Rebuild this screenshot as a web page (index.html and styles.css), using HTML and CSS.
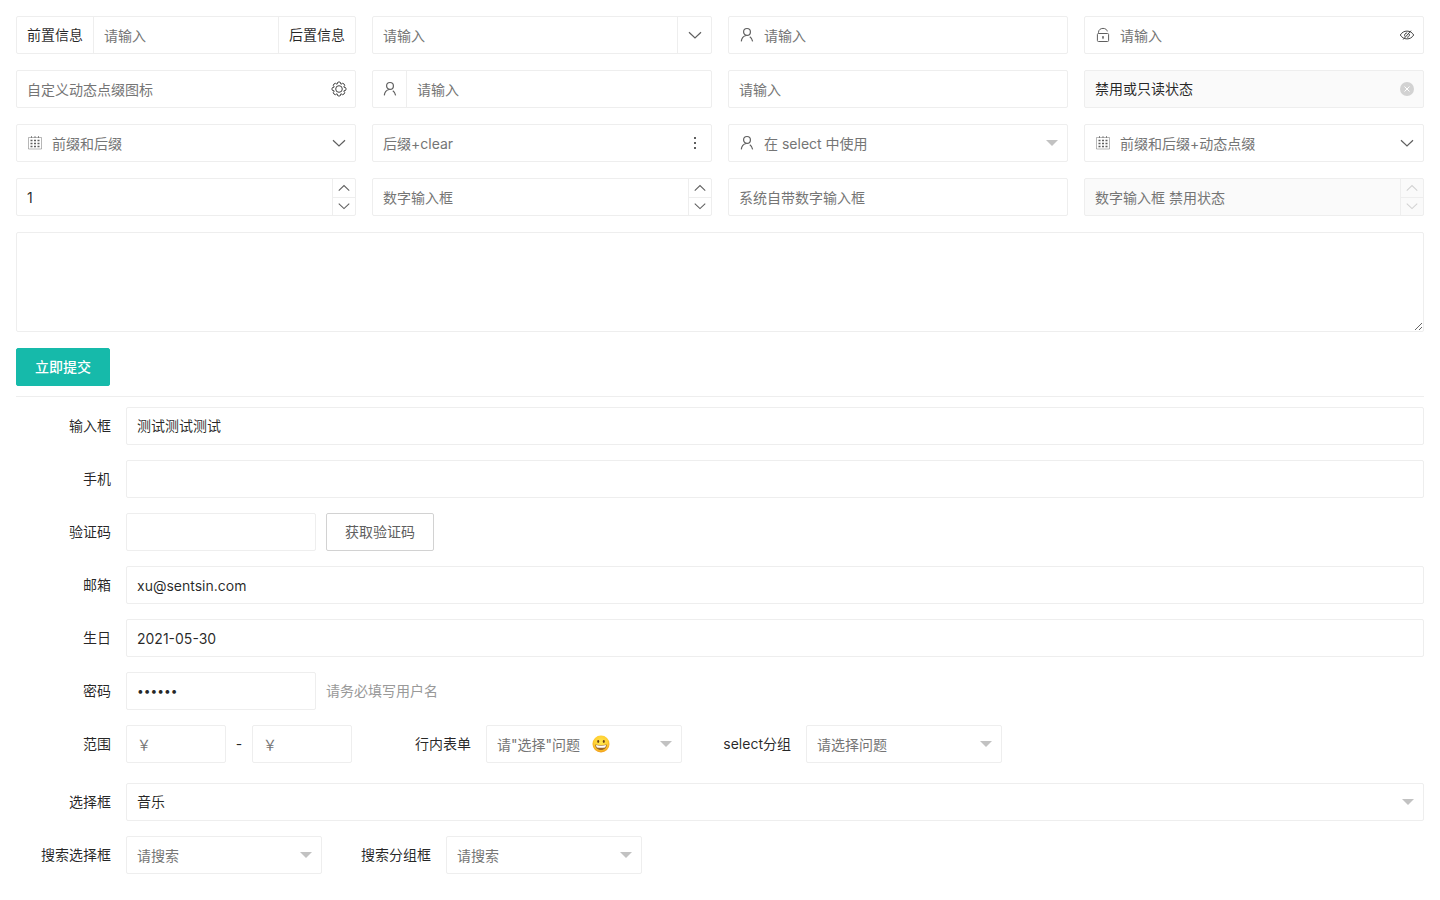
FILE: index.html
```html
<!DOCTYPE html>
<html lang="zh-CN">
<head>
<meta charset="utf-8">
<meta name="viewport" content="width=device-width, initial-scale=1">
<title>表单</title>
<link rel="stylesheet" href="styles.css">
</head>
<body>
<svg class="sprite" aria-hidden="true">
  <symbol id="i-user" viewBox="0 0 16 16"><g stroke-width="1.200"><circle cx="8" cy="4.900" r="3.400"/><path d="M7.300 8.500C4.500 9 2.600 11.400 2.300 14.400M10.800 9.800c1.600 1 2.500 2.600 2.800 4.600"/></g></symbol>
  <symbol id="i-down" viewBox="0 0 16 16"><path stroke-width="1.200" d="M2 5.200l6 5.800 6-5.800"/></symbol>
  <symbol id="i-up" viewBox="0 0 16 16"><path stroke-width="1.200" d="M2 11l6-5.800 6 5.800"/></symbol>
  <symbol id="i-lock" viewBox="0 0 16 16"><rect x="2.400" y="6.500" width="11.200" height="8" rx="1"/><path d="M3.500 6.500V5.400c0-2.500 2-4 4.500-4 2.300 0 4 1.100 4.300 3M8 9.600v2.500"/><circle cx="8" cy="10" r=".5"/></symbol>
  <symbol id="i-eye" viewBox="0 0 16 16"><path d="M1.300 8c1.600-2.600 3.900-3.900 6.700-3.900S13.100 5.400 14.700 8c-1.600 2.600-3.900 3.900-6.700 3.900S2.900 10.600 1.300 8z"/><path d="M5.900 9.500C5 7.700 6.200 5.900 8.200 5.900M10.200 6.900c.7 1.700-.3 3.200-2.100 3.400M12 3.700L4.200 12.500"/></symbol>
  <symbol id="i-gear" viewBox="0 0 16 16"><path stroke-linejoin="round" d="M6.200 3.100L6.500 1.500Q8 .2 9.500 1.500L9.800 3.100Q10 3.400 10.200 3.200L11.500 2.300Q13.500 2.500 13.700 4.500L12.800 5.800Q12.600 6 12.900 6.200L14.500 6.500Q15.800 8 14.500 9.500L12.900 9.800Q12.600 10 12.800 10.200L13.700 11.500Q13.500 13.500 11.500 13.700L10.200 12.800Q10 12.600 9.800 12.900L9.500 14.500Q8 15.800 6.500 14.500L6.200 12.900Q6 12.600 5.800 12.800L4.500 13.700Q2.500 13.500 2.300 11.500L3.200 10.200Q3.400 10 3.100 9.800L1.500 9.500Q.2 8 1.500 6.500L3.100 6.200Q3.400 6 3.200 5.800L2.300 4.500Q2.500 2.500 4.500 2.300L5.800 3.200Q6 3.400 6.200 3.100z"/><circle cx="8" cy="8" r="3.300"/></symbol>
  <symbol id="i-cal" viewBox="0 0 16 16"><path opacity=".45" d="M1.500 2.500v11.500M14.500 2.500v11.500M1.500 2.500h13M1.500 14h13"/><path opacity=".7" d="M4.500 1v2M8 1v2M11.500 1v2"/><path stroke-width="1.500" stroke-dasharray="2 1.500" d="M3.500 5.500h9.500M3.500 8.500h9.500M3.500 11.500h9.500"/></symbol>
  <symbol id="i-more" viewBox="0 0 16 16"><path stroke-width="2" d="M8 2v2M8 7v2M8 12v2"/></symbol>
  <symbol id="i-clear" viewBox="0 0 16 16"><circle class="solid" cx="8" cy="8" r="7"/><path class="cross" d="M5.500 5.500l5 5M10.500 5.500l-5 5"/></symbol>
</svg>

<main class="page">
  <form>
    <div class="grid">
      <div class="field"><label class="addon" for="a1">前置信息</label><input id="a1" placeholder="请输入"><label class="addon addon-end" for="a1">后置信息</label></div>
      <div class="field"><input aria-label="输入" placeholder="请输入"><span class="affix split-end"><svg><use href="#i-down"/></svg></span></div>
      <div class="field prefixed"><span class="affix lead"><svg><use href="#i-user"/></svg></span><input aria-label="用户" placeholder="请输入"></div>
      <div class="field prefixed"><span class="affix lead"><svg><use href="#i-lock"/></svg></span><input type="password" aria-label="密码输入" placeholder="请输入"><button type="button" class="affix dark" aria-label="显示密码"><svg><use href="#i-eye"/></svg></button></div>

      <div class="field"><input aria-label="图标" placeholder="自定义动态点缀图标"><button type="button" class="affix dark" aria-label="设置"><svg><use href="#i-gear"/></svg></button></div>
      <div class="field"><span class="affix split-start"><svg><use href="#i-user"/></svg></span><input aria-label="用户名" placeholder="请输入"></div>
      <div class="field"><input aria-label="内容" placeholder="请输入"></div>
      <div class="field disabled"><input aria-label="只读" value="禁用或只读状态" readonly><button type="button" class="affix clear" aria-label="清空"><svg><use href="#i-clear"/></svg></button></div>

      <div class="field prefixed"><span class="affix lead"><svg><use href="#i-cal"/></svg></span><input aria-label="前后缀" placeholder="前缀和后缀"><span class="affix"><svg><use href="#i-down"/></svg></span></div>
      <div class="field"><input aria-label="后缀" placeholder="后缀+clear"><span class="affix"><svg><use href="#i-more"/></svg></span></div>
      <div class="field prefixed select"><span class="affix lead"><svg><use href="#i-user"/></svg></span><select class="empty" aria-label="选择"><option>在 select 中使用</option></select></div>
      <div class="field prefixed"><span class="affix lead"><svg><use href="#i-cal"/></svg></span><input aria-label="动态点缀" placeholder="前缀和后缀+动态点缀"><span class="affix"><svg><use href="#i-down"/></svg></span></div>

      <div class="field"><input type="number" aria-label="数字" value="1"><span class="stepper"><button type="button" aria-label="增加"><svg><use href="#i-up"/></svg></button><button type="button" aria-label="减少"><svg><use href="#i-down"/></svg></button></span></div>
      <div class="field"><input type="number" aria-label="数字输入框" placeholder="数字输入框"><span class="stepper"><button type="button" aria-label="增加"><svg><use href="#i-up"/></svg></button><button type="button" aria-label="减少"><svg><use href="#i-down"/></svg></button></span></div>
      <div class="field"><input type="number" aria-label="系统数字输入框" placeholder="系统自带数字输入框"></div>
      <div class="field disabled"><input type="number" aria-label="禁用数字" placeholder="数字输入框 禁用状态" disabled><span class="stepper"><button type="button" aria-label="增加" disabled><svg><use href="#i-up"/></svg></button><button type="button" aria-label="减少" disabled><svg><use href="#i-down"/></svg></button></span></div>
    </div>
    <textarea aria-label="多行文本"></textarea>
    <button type="submit" class="btn btn-primary">立即提交</button>
  </form>
  <hr>
  <form class="rows">
    <div class="row"><label class="label" for="f1">输入框</label><div class="field grow"><input id="f1" value="测试测试测试"></div></div>
    <div class="row"><label class="label" for="f2">手机</label><div class="field grow"><input id="f2" type="tel"></div></div>
    <div class="row"><label class="label" for="f3">验证码</label><div class="field medium"><input id="f3"></div><button type="button" class="btn btn-plain">获取验证码</button></div>
    <div class="row"><label class="label" for="f4">邮箱</label><div class="field grow"><input id="f4" class="latin" type="email" value="xu@sentsin.com"></div></div>
    <div class="row"><label class="label" for="f5">生日</label><div class="field grow"><input id="f5" class="latin" value="2021-05-30"></div></div>
    <div class="row"><label class="label" for="f6">密码</label><div class="field medium"><input id="f6" class="secret" type="password" value="123456"></div><span class="hint">请务必填写用户名</span></div>
    <div class="row row-inline row-loose">
      <div class="group range"><label class="label" for="f7">范围</label><div class="field small"><input id="f7" placeholder="￥"></div><span class="dash">-</span><div class="field small"><input aria-label="最大值" placeholder="￥"></div></div>
      <div class="group"><label class="label" for="f8">行内表单</label>
        <div class="field select choice"><select id="f8" class="empty"><option>请"选择"问题</option></select>
          <svg class="emoji" viewBox="0 0 18 18" aria-hidden="true"><defs><radialGradient id="face" cx=".5" cy=".4" r=".6"><stop offset="0" stop-color="#ffe64d"/><stop offset=".65" stop-color="#ffd033"/><stop offset="1" stop-color="#f09a1a"/></radialGradient></defs><circle cx="9" cy="9" r="8.500" fill="url(#face)"/><ellipse cx="6.200" cy="6.500" rx="1" ry="1.400" fill="#6b4216"/><ellipse cx="11.800" cy="6.500" rx="1" ry="1.400" fill="#6b4216"/><path d="M3.300 9.500c3.500.900 7.900.900 11.400 0 .3 3-2.200 5.500-5.700 5.500s-6-2.500-5.700-5.500z" fill="#9a6425"/><path d="M4 10.100c3.200.700 6.800.700 10 0 0 1-.3 1.700-.9 2.300-2.600.5-5.600.5-8.200 0-.6-.6-.9-1.300-.9-2.300z" fill="#fff"/></svg>
        </div></div>
      <div class="group"><label class="label" for="f9">select分组</label><div class="field select choice"><select id="f9" class="empty"><option>请选择问题</option></select></div></div>
    </div>
    <div class="row"><label class="label" for="f10">选择框</label><div class="field select grow"><select id="f10"><option>音乐</option></select></div></div>
    <div class="row row-inline">
      <div class="group"><label class="label" for="f11">搜索选择框</label><div class="field select choice"><select id="f11" class="empty"><option>请搜索</option></select></div></div>
      <div class="group"><label class="label" for="f12">搜索分组框</label><div class="field select choice"><select id="f12" class="empty"><option>请搜索</option></select></div></div>
    </div>
  </form>
</main>
</body>
</html>
```

FILE: styles.css
```css
* { box-sizing: border-box; }

body {
  margin: 0;
  background: #fff;
  color: rgba(0, 0, 0, .85);
  font: 14px/24px Inter, "Noto Sans CJK SC", sans-serif;
}

input, select, textarea, button {
  margin: 0;
  border: 0;
  background: none;
  color: inherit;
  font: inherit;
}

.sprite { position: absolute; width: 0; height: 0; }
.page { padding: 16px; }

.grid {
  display: grid;
  grid-template-columns: repeat(4, minmax(0, 1fr));
  gap: 16px;
}

/* Bordered box holding one control and its add-ons */
.field {
  display: flex;
  position: relative;
  height: 38px;
  border: 1px solid #eee;
  border-radius: 2px;
  background: #fff;
}
.field input, .field select {
  flex: 1;
  width: 100%;
  min-width: 0;
  padding: 0 10px;
  outline: 0;
  appearance: none;
}
.field input::placeholder { color: #757575; opacity: 1; }
.field select.empty { color: #757575; }
.field input:placeholder-shown,
.field input[type="number"],
.field .latin,
.field .empty { padding-top: 2px; }
.field input[type="number"] { appearance: textfield; }
.field input::-webkit-inner-spin-button { appearance: none; margin: 0; }
.field .secret { font-size: 12px; }
.field.prefixed input, .field.prefixed select { padding-left: 0; }
.disabled { background: #fafafa; }

.addon {
  padding: 0 10px;
  border-right: 1px solid #eee;
  line-height: 36px;
  white-space: nowrap;
}
.addon-end { border-right: 0; border-left: 1px solid #eee; }

.affix {
  display: flex;
  flex: none;
  align-items: center;
  justify-content: center;
  width: 32px;
  padding: 0;
}
.lead { width: 35px; }
.split-start { width: 34px; border-right: 1px solid #eee; }
.split-end { width: 34px; border-left: 1px solid #eee; }

svg { fill: none; stroke: #5f5f5f; }
.affix svg { width: 16px; height: 16px; }
.dark svg { stroke: #444; }
.clear svg { stroke: none; }
.solid { fill: #d2d2d2; }
.cross { stroke: #fff; }

.stepper {
  display: flex;
  flex: none;
  flex-direction: column;
  width: 23px;
  border-left: 1px solid #eee;
}
.stepper button {
  display: flex;
  flex: 1;
  align-items: center;
  justify-content: center;
  padding: 0;
}
.stepper button + button { border-top: 1px solid #eee; }
.stepper svg { width: 14px; height: 14px; }
.stepper button:disabled svg { stroke: #d2d2d2; }

.select::after {
  content: "";
  position: absolute;
  top: 15px;
  right: 9px;
  border: 6px solid transparent;
  border-top-color: #c2c2c2;
  border-bottom: 0;
  pointer-events: none;
}

textarea {
  display: block;
  width: 100%;
  height: 100px;
  margin: 16px 0;
  padding: 6px 10px;
  border: 1px solid #eee;
  border-radius: 2px;
  resize: vertical;
}

.btn {
  display: block;
  height: 38px;
  padding: 0 18px;
  border: 1px solid transparent;
  border-radius: 2px;
  white-space: nowrap;
}
.btn-primary { border-color: #16baaa; background: #16baaa; color: #fff; font-weight: 500; }
.btn-plain { border-color: #d2d2d2; color: #5f5f5f; }

hr {
  height: 1px;
  margin: 10px 0;
  border: 0;
  background: #eee;
}

.rows { display: flex; flex-direction: column; gap: 15px; }
.row { display: flex; gap: 10px; }
.row .label { margin-right: -10px; }
.row-inline { flex-wrap: wrap; gap: 14px; }
.row-loose { padding-bottom: 5px; }
.group { display: flex; }
.group .label { margin-right: 0; }
.label {
  flex: none;
  width: 110px;
  padding: 0 15px;
  line-height: 38px;
  text-align: right;
  white-space: nowrap;
}
.grow { flex: 1; }
.medium { width: 190px; }
.small { width: 100px; }
.choice { width: 196px; }
.range { padding-right: 10px; }
.dash { width: 26px; line-height: 38px; text-align: center; }
.hint { color: #999; line-height: 38px; }

.emoji {
  position: absolute;
  top: 9px;
  left: 105px;
  width: 18px;
  height: 18px;
  stroke: none;
  pointer-events: none;
}
```
